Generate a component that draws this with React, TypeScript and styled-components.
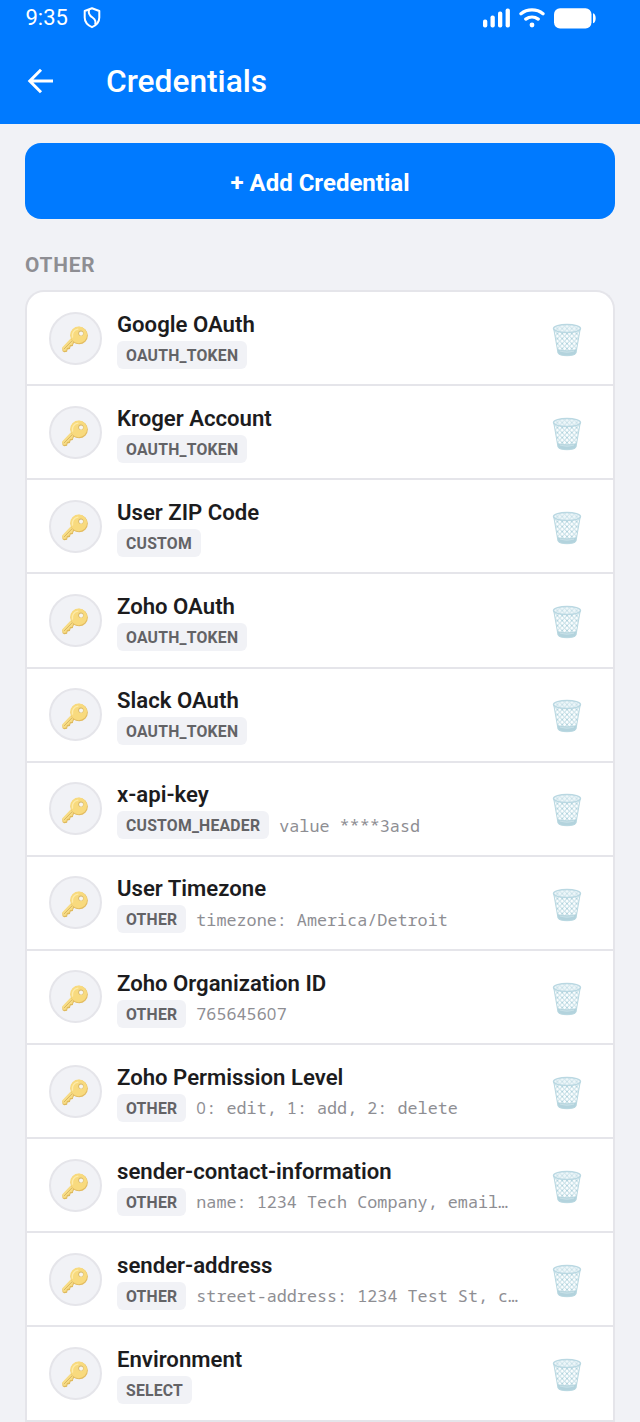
import React from "react";
import styled, { createGlobalStyle } from "styled-components";

const GlobalStyle = createGlobalStyle`
  *, *::before, *::after { box-sizing: border-box; }
  body { margin: 0; background: #f1f2f6; font-family: Roboto, "Liberation Sans", sans-serif; }
`;

const Screen = styled.div`
  width: 640px;
  height: 1422px;
  overflow: hidden;
  background: #f1f2f6;
`;

const Header = styled.header`
  height: 124px;
  background: #007aff;
  color: #fff;
`;

const StatusBar = styled.div`
  display: flex;
  align-items: center;
  height: 36.5px;
  padding: 0 43px 0 25.5px;
`;

const Clock = styled.span`
  font-size: 22px;
  line-height: 36px;
  width: 56.5px;
`;

const StatusIcons = styled.div`
  display: flex;
  align-items: center;
  margin-left: auto;
`;

const TitleBar = styled.div`
  display: flex;
  align-items: center;
  height: 88px;
  padding-left: 27px;
`;

const BackButton = styled.button`
  display: flex;
  width: 79px;
  padding: 0;
  border: 0;
  background: none;
  color: inherit;
`;

const Title = styled.h1`
  margin: 3px 0 0;
  font-size: 31.7px;
  line-height: 40px;
  font-weight: 500;
`;

const Content = styled.main`
  padding: 19px 25px 0;
`;

const AddButton = styled.button`
  display: block;
  width: 100%;
  height: 75.5px;
  padding: 4px 0 0;
  border: 0;
  border-radius: 16px;
  background: #007aff;
  color: #fff;
  font: 700 24px/30px Roboto, "Liberation Sans", sans-serif;
`;

const SectionTitle = styled.h2`
  margin: 32.5px 0 11px;
  font-size: 20.8px;
  line-height: 28px;
  font-weight: 700;
  letter-spacing: 0.8px;
  color: #8e8e93;
`;

const Card = styled.section`
  border: 2px solid #e5e5ea;
  border-bottom: 0;
  border-radius: 19px 19px 0 0;
  background: #fff;
`;

const Row = styled.div`
  display: flex;
  align-items: center;
  height: 94.13px;
  padding: 0 31px 0 22px;
  border-bottom: 2px solid #e5e5ea;
`;

const Avatar = styled.div`
  display: grid;
  place-items: center;
  flex: none;
  width: 53px;
  height: 53px;
  padding: 3px 2px 0 0;
  border: 2px solid #e5e5ea;
  border-radius: 50%;
  background: #f1f2f6;
`;

const Details = styled.div`
  flex: 1;
  min-width: 0;
  margin: 2.2px 28px 0 15px;
`;

const Name = styled.div`
  font-size: 22.15px;
  line-height: 28px;
  font-weight: 600;
  color: #1c1c1e;
  white-space: nowrap;
`;

const Meta = styled.div`
  display: flex;
  align-items: center;
  gap: 10px;
  margin-top: 3px;
`;

const Badge = styled.span`
  flex: none;
  height: 28px;
  padding: 0 9px;
  border-radius: 6px;
  background: #f1f2f6;
  color: #636366;
  font-size: 15.75px;
  line-height: 29px;
  font-weight: 700;
  letter-spacing: 0.22px;
`;

const Value = styled.span`
  min-width: 0;
  overflow: hidden;
  text-overflow: ellipsis;
  white-space: nowrap;
  font-family: "Droid Sans Mono", "Noto Sans Mono", "DejaVu Sans Mono", monospace;
  font-size: 16.78px;
  line-height: 27px;
  color: #8e8e93;
`;

/* An unslashed zero, spaced to the monospace advance. */
const Zero = styled.span`
  font-family: "Open Sans", "Noto Sans", sans-serif;
  letter-spacing: 0.47px;
`;

const DeleteButton = styled.button`
  display: flex;
  flex: none;
  margin-top: 3.5px;
  padding: 0;
  border: 0;
  background: none;
`;

const KeyIcon = () => (
  <svg width="29" height="29" viewBox="0 0 30 30" fill="none">
    <path d="M12.5 13.5 2.3 24.1l.4 3 1.6 1.1 3-.4.5-2.5 2.5-.4.6-2.6 2.4-.6.5-2.2 3.5-3z" fill="#dfb95b" />
    <path d="M12.2 12.8 2.2 23.2l.5 2.8 1.5.9 2.4-.5.5-2.6 2.5-.4.6-2.5 2.5-.5.6-2.2 3.4-2.5z" fill="#f7dc86" />
    <path d="m4 25 10-10.2" stroke="#d9b65e" strokeWidth="1" />
    <circle cx="19.8" cy="10.9" r="9" fill="#e3bc61" />
    <circle cx="19.3" cy="10.2" r="8.7" fill="#f8da7e" />
    <path d="M12.9 12.5c-.8-3.8 1.6-7.5 5.6-8.2" stroke="#fdeba9" strokeWidth="1.4" strokeLinecap="round" />
    <circle cx="21.6" cy="8.5" r="2.7" fill="#d3b66d" />
    <circle cx="21.8" cy="8.9" r="2.1" fill="#f7f5ef" />
  </svg>
);

const TrashIcon = () => (
  <svg width="30" height="34" viewBox="0 0 30 34" fill="none">
    <defs>
      <pattern id="mesh" width="4.8" height="5" patternUnits="userSpaceOnUse" x="0.6" y="0.6">
        <path d="M-1-1.04 5.8 6.04M-1 6.04 5.8-1.04" stroke="#a5ccd8" strokeWidth="0.85" />
      </pattern>
    </defs>
    <path d="M1.8 6 6 30c.5 3.6 17.5 3.6 18 0l4.2-24z" fill="#fafdfe" />
    <path d="M1.8 6 6 30c.5 3.6 17.5 3.6 18 0l4.2-24z" fill="url(#mesh)" />
    <path d="M5.2 26c3.8 1.7 15.8 1.700 19.600 0L24 30c-.5 3.600-17.500 3.600-18 0z" fill="#b3d3dd" />
    <path d="M8 28c4 1.200 10 1.200 14 0" stroke="#c9e1e8" strokeWidth="1.200" />
    <path d="M1.8 6 6 30c.5 3.600 17.500 3.600 18 0l4.200-24" stroke="#b9d8e1" strokeWidth="1" />
    <ellipse cx="15" cy="5.500" rx="13.500" ry="4" fill="#edf6f9" />
    <ellipse cx="15" cy="5.500" rx="13.500" ry="4" fill="url(#mesh)" opacity=".6" />
    <ellipse cx="15" cy="5.500" rx="13.500" ry="4" stroke="#bad8e2" strokeWidth="1.400" />
  </svg>
);

const BackIcon = () => (
  <svg width="26" height="26" viewBox="0 0 26 26" fill="none" stroke="currentColor" strokeWidth="3">
    <path d="M26 13H3.5M14 1.800 2.800 13 14 24.200" />
  </svg>
);

const ShieldIcon = () => (
  <svg width="20" height="22" viewBox="0 0 20 22" fill="none" stroke="currentColor" strokeWidth="2" strokeLinejoin="round">
    <path d="M10 1.200 17.300 4v6.500c0 4.300-3 7.700-7.300 9.700-4.300-2-7.300-5.400-7.300-9.700V4z" />
    <path d="M7 2.700c-1 3.800.2 5.700 3.500 7.800 3 2 3.800 3.800 2.600 7.200" />
  </svg>
);

const SignalIcon = () => (
  <svg width="28" height="20" viewBox="0 0 28 20" fill="currentColor">
    <rect x="0" y="11.5" width="4.3" height="8" rx="1.9" />
    <rect x="7.5" y="7.5" width="4.3" height="12" rx="1.9" />
    <rect x="15" y="3.5" width="4.3" height="16" rx="1.9" />
    <rect x="22.6" y="0.5" width="4.3" height="19" rx="1.9" />
  </svg>
);

const WifiIcon = () => (
  <svg width="26" height="20" viewBox="0 0 26 20" fill="none" stroke="currentColor" strokeWidth="3.3" strokeLinecap="round">
    <path d="M2 5.700c6.300-5.100 15.700-5.100 22 0M6.800 11.100c3.700-2.700 8.700-2.700 12.400 0" />
    <circle cx="13" cy="17" r="2.4" fill="currentColor" stroke="none" />
  </svg>
);

const BatteryIcon = () => (
  <svg width="43" height="21" viewBox="0 0 43 21" fill="currentColor">
    <rect x="0" y="0.2" width="37.5" height="20.3" rx="6" />
    <path d="M39 5.300c3.600.5 3.600 9.500 0 10z" />
  </svg>
);

const Gap = styled.span<{ $w: number }>`
  width: ${(p) => p.$w}px;
`;

const withPlainZeros = (text: string) =>
  text.split("0").map((part, i) => (
    <React.Fragment key={i}>
      {i > 0 && <Zero>0</Zero>}
      {part}
    </React.Fragment>
  ));

const credentials: { name: string; type: string; value?: string }[] = [
  { name: "Google OAuth", type: "OAUTH_TOKEN" },
  { name: "Kroger Account", type: "OAUTH_TOKEN" },
  { name: "User ZIP Code", type: "CUSTOM" },
  { name: "Zoho OAuth", type: "OAUTH_TOKEN" },
  { name: "Slack OAuth", type: "OAUTH_TOKEN" },
  { name: "x-api-key", type: "CUSTOM_HEADER", value: "value ****3asd" },
  { name: "User Timezone", type: "OTHER", value: "timezone: America/Detroit" },
  { name: "Zoho Organization ID", type: "OTHER", value: "765645607" },
  { name: "Zoho Permission Level", type: "OTHER", value: "0: edit, 1: add, 2: delete" },
  { name: "sender-contact-information", type: "OTHER", value: "name: 1234 Tech Company, email…" },
  { name: "sender-address", type: "OTHER", value: "street-address: 1234 Test St, c…" },
  { name: "Environment", type: "SELECT" },
];

export default function App() {
  return (
    <Screen>
      <GlobalStyle />
      <Header>
        <StatusBar>
          <Clock>9:35</Clock>
          <ShieldIcon />
          <StatusIcons>
            <SignalIcon />
            <Gap $w={8} />
            <WifiIcon />
            <Gap $w={9} />
            <BatteryIcon />
          </StatusIcons>
        </StatusBar>
        <TitleBar>
          <BackButton aria-label="Back">
            <BackIcon />
          </BackButton>
          <Title>Credentials</Title>
        </TitleBar>
      </Header>
      <Content>
        <AddButton>+ Add Credential</AddButton>
        <SectionTitle>OTHER</SectionTitle>
        <Card>
          {credentials.map((c) => (
            <Row key={c.name}>
              <Avatar>
                <KeyIcon />
              </Avatar>
              <Details>
                <Name>{c.name}</Name>
                <Meta>
                  <Badge>{c.type}</Badge>
                  {c.value && <Value>{withPlainZeros(c.value)}</Value>}
                </Meta>
              </Details>
              <DeleteButton aria-label="Delete">
                <TrashIcon />
              </DeleteButton>
            </Row>
          ))}
        </Card>
      </Content>
    </Screen>
  );
}
